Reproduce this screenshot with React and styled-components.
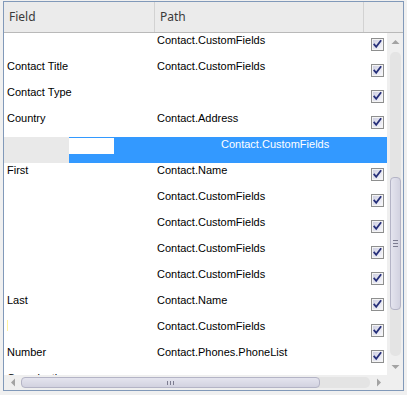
import React from 'react';
import styled, { createGlobalStyle } from 'styled-components';

const GlobalStyle = createGlobalStyle`
  html, body {
    margin: 0;
    padding: 0;
    background: #f0f0f0;
  }
  body {
    width: 407px;
    height: 395px;
    overflow: hidden;
  }
`;

const Page = styled.div`
  padding: 1px 0 0 3px;
`;

const GridBox = styled.div`
  width: 399px;
  height: 388px;
  border: 1px solid #8199b9;
  background: #fff;
  display: flex;
  flex-direction: column;
  overflow: hidden;
`;

const Header = styled.div`
  display: flex;
  height: 30px;
  background: #ebebeb;
  border-bottom: 1px solid #b9b9b9;
  font-family: "Noto Sans", "Liberation Sans", sans-serif;
  font-size: 12px;
  color: #3a3a3a;
`;

const HeaderCell = styled.div`
  width: ${p => p.$w ? `${p.$w}px` : 'auto'};
  flex: ${p => p.$w ? 'none' : '1'};
  border-right: ${p => p.$last ? 'none' : '1px solid #d2d2d2'};
  padding-left: ${p => p.$pad || 5}px;
  line-height: 30px;
  box-sizing: border-box;
`;

const Middle = styled.div`
  flex: 1;
  display: flex;
  min-height: 0;
`;

const Body = styled.div`
  flex: 1;
  overflow: hidden;
  font-family: "Liberation Sans", Arial, sans-serif;
  font-size: 11px;
  color: #000;
`;

const Row = styled.div`
  display: flex;
  height: 26px;
  position: relative;
`;

const Cell = styled.div`
  width: ${p => p.$w}px;
  flex: none;
  padding: 1px 0 0 3px;
  line-height: 13px;
  box-sizing: border-box;
  white-space: nowrap;
  overflow: hidden;
`;

const CheckCell = styled.div`
  flex: 1;
  display: flex;
  justify-content: flex-end;
  padding: 5px 3px 0 0;
`;

const Caret = styled.span`
  position: absolute;
  left: 3px;
  top: 1px;
  width: 1px;
  height: 11px;
  background: #fff3a0;
`;

const RowHeaderCell = styled.div`
  width: 65px;
  flex: none;
  background: #e9e9e9;
`;

const SelectedArea = styled.div`
  flex: 1;
  display: flex;
  background: #3399ff;
  color: #fff;
`;

const EditCell = styled.div`
  width: 150px;
  flex: none;
`;

const EditBox = styled.div`
  width: 45px;
  height: 16px;
  margin-top: 1px;
  background: #fff;
`;

const SelectedText = styled.div`
  padding: 1px 0 0 2px;
  line-height: 13px;
  white-space: nowrap;
`;

const VScroll = styled.div`
  width: 15px;
  flex: none;
  background: #efefef;
  display: flex;
  flex-direction: column;
  align-items: center;
  padding-left: 1px;
`;

const ArrowBtn = styled.div`
  width: 15px;
  height: 17px;
  flex: none;
  display: flex;
  align-items: center;
  justify-content: center;
`;

const VTrack = styled.div`
  flex: 1;
  width: 11px;
  border-radius: 5px;
  background: #e4e4e4;
  position: relative;
  margin: 2px 0;
`;

const VThumb = styled.div`
  position: absolute;
  left: 0;
  top: 125px;
  width: 9px;
  height: 131px;
  border: 1px solid #b4b4c6;
  border-radius: 4px;
  background: linear-gradient(to right, #e4e4ee, #d2d2e0);
  display: flex;
  flex-direction: column;
  align-items: center;
  justify-content: center;
  gap: 2px;
`;

const GripV = styled.span`
  width: 5px;
  height: 1px;
  background: #7c7c90;
`;

const BottomBar = styled.div`
  height: 15px;
  flex: none;
  display: flex;
  background: #efefef;
`;

const HScroll = styled.div`
  flex: 1;
  display: flex;
  align-items: center;
`;

const HArrowBtn = styled.div`
  width: 17px;
  height: 15px;
  flex: none;
  display: flex;
  align-items: center;
  justify-content: center;
`;

const HTrack = styled.div`
  flex: 1;
  height: 11px;
  border-radius: 5px;
  background: #e4e4e4;
  position: relative;
`;

const HThumb = styled.div`
  position: absolute;
  top: 0;
  left: 0;
  width: 297px;
  height: 9px;
  border: 1px solid #b4b4c6;
  border-radius: 4px;
  background: linear-gradient(to bottom, #e4e4ee, #d2d2e0);
  display: flex;
  align-items: center;
  justify-content: center;
  gap: 2px;
`;

const GripH = styled.span`
  width: 1px;
  height: 4px;
  background: #7c7c90;
`;

const Corner = styled.div`
  width: 16px;
  flex: none;
  background: #efefef;
`;

function CheckBox() {
  return (
    <svg width="13" height="13" viewBox="0 0 13 13">
      <defs>
        <linearGradient id="cbg" x1="0" y1="0" x2="1" y2="1">
          <stop offset="0" stopColor="#cfd0e2" />
          <stop offset="1" stopColor="#f6f6fb" />
        </linearGradient>
      </defs>
      <rect x="0.5" y="0.5" width="12" height="12" fill="#f4f4f4" stroke="#8e8f8f" />
      <rect x="2" y="2" width="9" height="9" fill="url(#cbg)" />
      <path d="M3.3 6.6 L5.2 8.9 L9.6 3" fill="none" stroke="#27307a" strokeWidth="1.8" strokeLinecap="square" />
    </svg>
  );
}

function Arrow({ dir }) {
  const pts = {
    up: '0,5 4,1 8,5',
    down: '0,1 4,5 8,1',
    left: '5,0 1,4 5,8',
    right: '1,0 5,4 1,8',
  }[dir];
  const vertical = dir === 'up' || dir === 'down';
  return (
    <svg width={vertical ? 9 : 6} height={vertical ? 6 : 9} viewBox={vertical ? '0 0 8 6' : '0 0 6 8'}>
      <polygon points={pts} fill="#a3a3a3" />
    </svg>
  );
}

const rows = [
  { field: '', path: 'Contact.CustomFields' },
  { field: 'Contact Title', path: 'Contact.CustomFields' },
  { field: 'Contact Type', path: '' },
  { field: 'Country', path: 'Contact.Address' },
  { selected: true, path: 'Contact.CustomFields' },
  { field: 'First', path: 'Contact.Name' },
  { field: '', path: 'Contact.CustomFields' },
  { field: '', path: 'Contact.CustomFields' },
  { field: '', path: 'Contact.CustomFields' },
  { field: '', path: 'Contact.CustomFields' },
  { field: 'Last', path: 'Contact.Name' },
  { field: '', path: 'Contact.CustomFields', caret: true },
  { field: 'Number', path: 'Contact.Phones.PhoneList' },
  { field: 'Organization', path: '' },
];

export default function App() {
  return (
    <>
      <GlobalStyle />
      <Page>
        <GridBox>
          <Header>
            <HeaderCell $w={151}>Field</HeaderCell>
            <HeaderCell $w={209}>Path</HeaderCell>
            <HeaderCell $last />
          </Header>
          <Middle>
            <Body>
              {rows.map((r, i) =>
                r.selected ? (
                  <Row key={i}>
                    <RowHeaderCell />
                    <SelectedArea>
                      <EditCell><EditBox /></EditCell>
                      <SelectedText>{r.path}</SelectedText>
                    </SelectedArea>
                  </Row>
                ) : (
                  <Row key={i}>
                    {r.caret && <Caret />}
                    <Cell $w={150}>{r.field}</Cell>
                    <Cell $w={209}>{r.path}</Cell>
                    <CheckCell><CheckBox /></CheckCell>
                  </Row>
                )
              )}
            </Body>
            <VScroll>
              <ArrowBtn><Arrow dir="up" /></ArrowBtn>
              <VTrack>
                <VThumb>
                  <GripV /><GripV /><GripV />
                </VThumb>
              </VTrack>
              <ArrowBtn><Arrow dir="down" /></ArrowBtn>
            </VScroll>
          </Middle>
          <BottomBar>
            <HScroll>
              <HArrowBtn><Arrow dir="left" /></HArrowBtn>
              <HTrack>
                <HThumb>
                  <GripH /><GripH /><GripH />
                </HThumb>
              </HTrack>
              <HArrowBtn><Arrow dir="right" /></HArrowBtn>
            </HScroll>
            <Corner />
          </BottomBar>
        </GridBox>
      </Page>
    </>
  );
}
